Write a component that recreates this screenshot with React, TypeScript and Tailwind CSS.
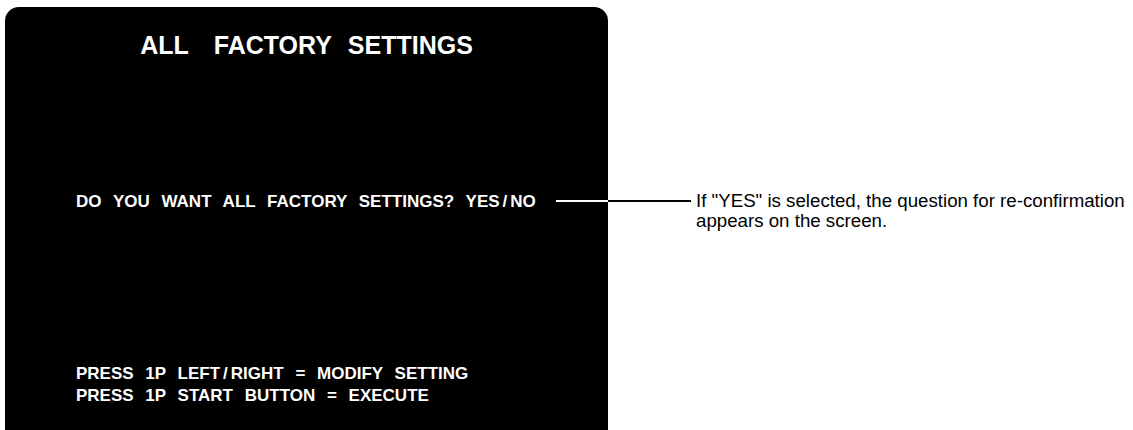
import React from "react";

export default function App() {
  const sans = { fontFamily: '"Liberation Sans", Arial, sans-serif' };
  return (
    <div className="w-[1133px] h-[430px] overflow-hidden bg-white flex items-start" style={sans}>
      {/* Monitor screen */}
      <div className="ml-[5px] mt-[7px] w-[603px] h-[440px] shrink-0 bg-black rounded-[14px] flex flex-col text-white font-bold">
        <div className="mt-[24px] flex justify-center text-[25px] leading-[28px]">
          <span>ALL</span>
          <span className="ml-[25px]">FACTORY</span>
          <span className="ml-[16px]">SETTINGS</span>
        </div>
        <div className="mt-[133px] pl-[71px] flex items-start">
          <div className="text-[17px] leading-[20px] [word-spacing:7px] whitespace-nowrap">
            DO YOU WANT ALL FACTORY SETTINGS? YES<span className="mx-[3px] [word-spacing:0px]">/</span>NO
          </div>
          <div className="ml-auto mt-[8px] w-[52px] h-[2px] bg-white" />
        </div>
        <div className="mt-[151px] pl-[71px] text-[17px] leading-[22px] [word-spacing:7px] whitespace-nowrap">
          <div>
            PRESS 1P LEFT<span className="mx-[3px] [word-spacing:0px]">/</span>RIGHT = MODIFY SETTING
          </div>
          <div>PRESS 1P START BUTTON = EXECUTE</div>
        </div>
      </div>
      {/* Annotation */}
      <div className="mt-[191px] flex items-start">
        <div className="mt-[8.5px] w-[83px] h-[2px] bg-black" />
        <div className="ml-[5px] text-[18.7px] leading-[20px] text-black">
          <div className="whitespace-nowrap">If "YES" is selected, the question for re-confirmation</div>
          <div className="whitespace-nowrap">appears on the screen.</div>
        </div>
      </div>
    </div>
  );
}
